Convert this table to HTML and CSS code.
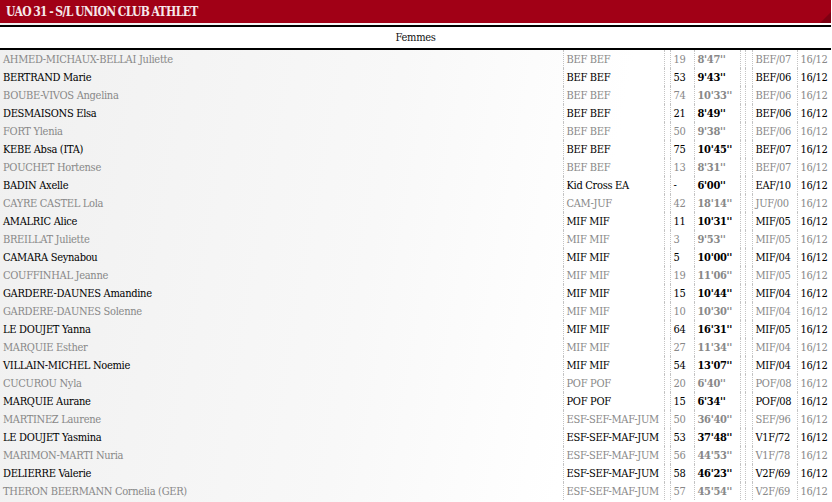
FILE: index.html
```html
<!DOCTYPE html>
<html>
  <head>
    <meta charset="UTF-8" />
    <title>UAO 31 - S/L UNION CLUB ATHLET</title>
    <link rel="stylesheet" href="styles.css">
  </head>
  <body>
    <div class="club-bar">UAO 31 - S/L UNION CLUB ATHLET</div>
    <table class="results">
      <colgroup>
        <col class="c-name" />
        <col class="c-cat" />
        <col class="c-gap1" />
        <col class="c-place" />
        <col class="c-time" />
        <col class="c-gap2" />
        <col class="c-gap3" />
        <col class="c-code" />
        <col class="c-date" />
      </colgroup>
      <thead>
        <tr><th colspan="9" class="sex">Femmes</th></tr>
      </thead>
      <tbody id="result-list"></tbody>
    </table>
    <script>
      const results = [
        ["AHMED-MICHAUX-BELLAI Juliette", "BEF BEF", "19", "8'47''", "BEF/07"],
        ["BERTRAND Marie", "BEF BEF", "53", "9'43''", "BEF/06"],
        ["BOUBE-VIVOS Angelina", "BEF BEF", "74", "10'33''", "BEF/06"],
        ["DESMAISONS Elsa", "BEF BEF", "21", "8'49''", "BEF/06"],
        ["FORT Ylenia", "BEF BEF", "50", "9'38''", "BEF/06"],
        ["KEBE Absa (ITA)", "BEF BEF", "75", "10'45''", "BEF/07"],
        ["POUCHET Hortense", "BEF BEF", "13", "8'31''", "BEF/07"],
        ["BADIN Axelle", "Kid Cross EA", "-", "6'00''", "EAF/10"],
        ["CAYRE CASTEL Lola", "CAM-JUF", "42", "18'14''", "JUF/00"],
        ["AMALRIC Alice", "MIF MIF", "11", "10'31''", "MIF/05"],
        ["BREILLAT Juliette", "MIF MIF", "3", "9'53''", "MIF/05"],
        ["CAMARA Seynabou", "MIF MIF", "5", "10'00''", "MIF/04"],
        ["COUFFINHAL Jeanne", "MIF MIF", "19", "11'06''", "MIF/05"],
        ["GARDERE-DAUNES Amandine", "MIF MIF", "15", "10'44''", "MIF/04"],
        ["GARDERE-DAUNES Solenne", "MIF MIF", "10", "10'30''", "MIF/04"],
        ["LE DOUJET Yanna", "MIF MIF", "64", "16'31''", "MIF/05"],
        ["MARQUIE Esther", "MIF MIF", "27", "11'34''", "MIF/04"],
        ["VILLAIN-MICHEL Noemie", "MIF MIF", "54", "13'07''", "MIF/04"],
        ["CUCUROU Nyla", "POF POF", "20", "6'40''", "POF/08"],
        ["MARQUIE Aurane", "POF POF", "15", "6'34''", "POF/08"],
        ["MARTINEZ Laurene", "ESF-SEF-MAF-JUM", "50", "36'40''", "SEF/96"],
        ["LE DOUJET Yasmina", "ESF-SEF-MAF-JUM", "53", "37'48''", "V1F/72"],
        ["MARIMON-MARTI Nuria", "ESF-SEF-MAF-JUM", "56", "44'53''", "V1F/78"],
        ["DELIERRE Valerie", "ESF-SEF-MAF-JUM", "58", "46'23''", "V2F/69"],
        ["THERON BEERMANN Cornelia (GER)", "ESF-SEF-MAF-JUM", "57", "45'54''", "V2F/69"]
      ];

      const tbody = document.getElementById("result-list");

      results.forEach((r, i) => {
        const row = tbody.insertRow();
        // une ligne sur deux en gris
        row.className = i % 2 === 0 ? "odd" : "even";
        const cells = [r[0], r[1], "", r[2], r[3], "", "", r[4], "16/12"];
        cells.forEach((text, j) => {
          const cell = row.insertCell();
          cell.textContent = text;
          if (j === 4) cell.className = "time";
        });
      });
    </script>
  </body>
</html>
```

FILE: styles.css
```css
body {
  font-family: "DejaVu Serif Condensed", "DejaVu Serif", serif;
  background: linear-gradient(100deg, #f0f0f0 0%, #f8f8f8 45%, #ffffff 70%);
  margin: 0;
  padding: 0;
  width: 831px;
  min-height: 502px;
}

.club-bar {
  position: relative;
  height: 23px;
  line-height: 24px;
  padding-left: 6px;
  background-color: #a10016;
  color: #f6e8ea;
  font-weight: bold;
  font-size: 12px;
  letter-spacing: -0.6px;
  word-spacing: -1px;
  margin-bottom: 2px;
  overflow: hidden;
}

.club-bar::after {
  content: "";
  position: absolute;
  right: 0;
  bottom: 0;
  border-style: solid;
  border-width: 0 0 11px 11px;
  border-color: transparent transparent #7e0012 transparent;
}

.results {
  width: 831px;
  table-layout: fixed;
  border-collapse: collapse;
  font-size: 11px;
  letter-spacing: -0.3px;
}

.c-name { width: 563px; }
.c-cat { width: 101px; }
.c-gap1 { width: 6px; }
.c-place { width: 24px; }
.c-time { width: 46px; }
.c-gap2 { width: 5px; }
.c-gap3 { width: 7px; }
.c-code { width: 45px; }
.c-date { width: 34px; }

.sex {
  background-color: #ffffff;
  border-top: 2px solid #000;
  border-bottom: 2px solid #000;
  height: 21px;
  padding: 0;
  font-weight: normal;
  font-size: 11px;
  color: #111;
  text-align: center;
}

.results td {
  height: 17px;
  padding: 1px 0 0 3px;
  white-space: nowrap;
  overflow: hidden;
  border-left: 1px dotted #c4c4c4;
}

.results td:first-child {
  border-left: none;
}

.results td.time {
  font-weight: bold;
}

.odd td {
  color: #888888;
}

.even td {
  color: #000;
}
```
